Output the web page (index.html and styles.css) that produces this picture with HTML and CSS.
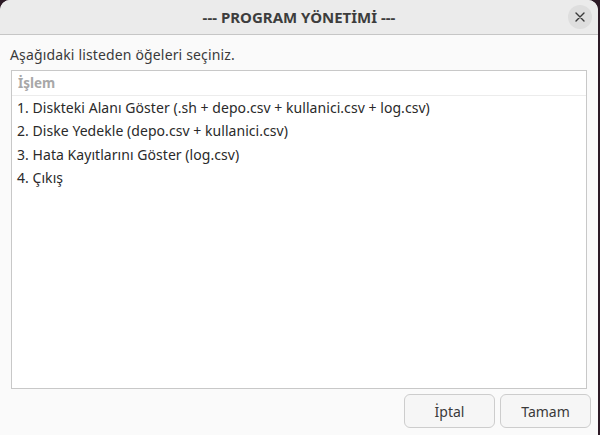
FILE: index.html
```html
<!DOCTYPE html>
<html lang="tr">
<head>
<meta charset="utf-8">
<link rel="stylesheet" href="styles.css">
</head>
<body>
<div class="desk">
  <div class="window">
    <header class="titlebar">
      <span class="title">--- PROGRAM YÖNETİMİ ---</span>
      <button class="close" aria-label="Kapat">
        <svg width="10" height="10" viewBox="0 0 10 10"><path d="M1 1L9 9M9 1L1 9" stroke="#3a3a3a" stroke-width="1.4" stroke-linecap="round"/></svg>
      </button>
    </header>
    <main class="content">
      <p class="prompt">Aşağıdaki listeden öğeleri seçiniz.</p>
      <div class="list">
        <div class="list-head">İşlem</div>
        <div class="row">1. Diskteki Alanı Göster (.sh + depo.csv + kullanici.csv + log.csv)</div>
        <div class="row">2. Diske Yedekle (depo.csv + kullanici.csv)</div>
        <div class="row">3. Hata Kayıtlarını Göster (log.csv)</div>
        <div class="row">4. Çıkış</div>
      </div>
      <div class="actions">
        <button class="btn">İptal</button>
        <button class="btn">Tamam</button>
      </div>
    </main>
  </div>
</div>
</body>
</html>
```
FILE: styles.css
```css
html, body {
  margin: 0;
  padding: 0;
  width: 600px;
  height: 435px;
  overflow: hidden;
  background: #2c1a26;
}
.desk {
  display: flex;
  width: 600px;
  height: 435px;
}
.window {
  width: 598px;
  height: 435px;
  background: #fafafa;
  border-radius: 10px 10px 0 0;
  display: flex;
  flex-direction: column;
  font-family: "Noto Sans", "DejaVu Sans", sans-serif;
  color: #323232;
  overflow: hidden;
}
.titlebar {
  position: relative;
  height: 34px;
  flex: none;
  background: #ebebeb;
  border-bottom: 1px solid #c6c6c6;
  display: flex;
  align-items: center;
  justify-content: center;
}
.title {
  font-weight: bold;
  font-size: 15px;
  color: #3d3d3d;
  letter-spacing: 0;
}
.close {
  position: absolute;
  right: 6px;
  top: 5px;
  width: 24px;
  height: 24px;
  border: none;
  border-radius: 50%;
  background: #dedede;
  padding: 0;
  display: flex;
  align-items: center;
  justify-content: center;
}
.content {
  flex: 1;
  display: flex;
  flex-direction: column;
  padding: 10px 7px 7px 10px;
}
.prompt {
  margin: 0 0 5px 0;
  font-size: 14px;
  line-height: 20px;
  color: #3a3a3a;
  letter-spacing: 0.15px;
}
.list {
  height: 317px;
  margin-left: 1px;
  margin-right: 4px;
  background: #ffffff;
  border: 1px solid #c8c8c8;
  display: flex;
  flex-direction: column;
}
.list-head {
  height: 24px;
  line-height: 24px;
  padding-left: 6px;
  font-size: 13.5px;
  font-weight: bold;
  color: #a8a8a8;
  border-bottom: 1px solid #ececec;
}
.row {
  height: 23.33px;
  line-height: 23.33px;
  padding-left: 5px;
  font-size: 14px;
  color: #2a2a2a;
  letter-spacing: 0.05px;
  white-space: nowrap;
}
.row:first-of-type {
  margin-top: 1px;
}
.actions {
  display: flex;
  justify-content: flex-end;
  gap: 5px;
  margin-top: 5px;
}
.btn {
  width: 91px;
  height: 34px;
  background: #f6f6f6;
  border: 1px solid #cdcdcd;
  border-radius: 6px;
  font-family: "Noto Sans", "DejaVu Sans", sans-serif;
  font-size: 14px;
  color: #3a3a3a;
  padding: 0;
}
```
